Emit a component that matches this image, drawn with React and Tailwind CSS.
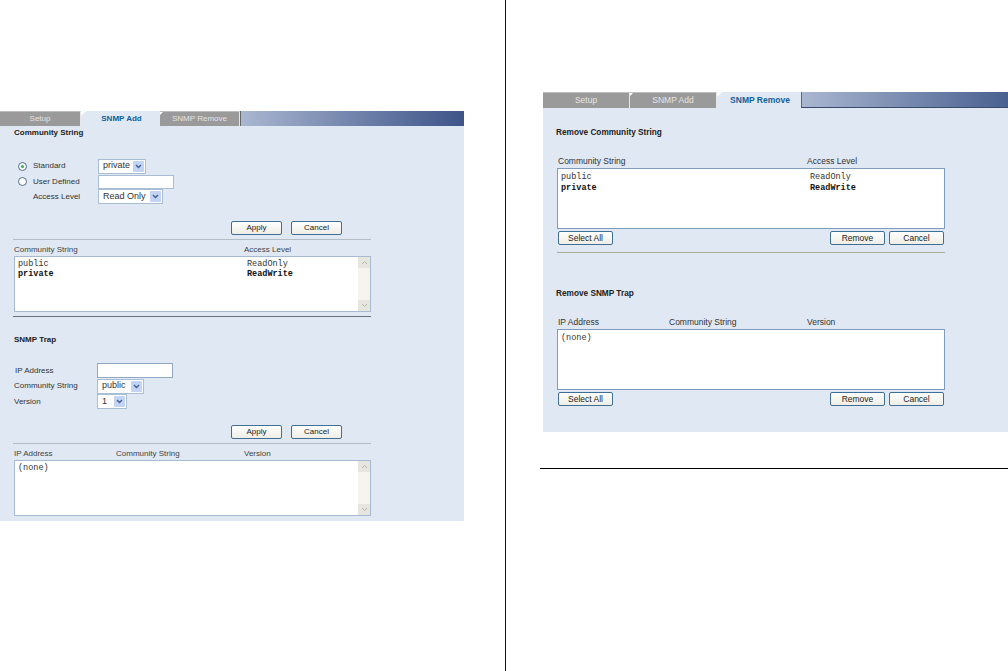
const sans = "font-['Liberation_Sans',Arial,sans-serif]";
const mono = "font-['Liberation_Mono','Courier_New',monospace]";

function Corner({ size = 5 }) {
  return (
    <svg className="absolute left-0 top-0" width={size} height={size} viewBox="0 0 5 5">
      <path d="M0 0H5L0 5Z" fill="#fff" />
    </svg>
  );
}

function Tabs({ items, active, widths, height, end, size, extra }) {
  return (
    <div className={`flex ${height} ${size} ${sans}`}>
      {items.map((t, i) => (
        <div
          key={t}
          style={{ width: widths[i] }}
          className={
            i === active
              ? "relative flex items-center justify-center bg-[#e0e8f3] pl-[2px] font-bold text-[#0f5f9a]"
              : "relative flex items-center justify-center border-r border-[#e6e6e6] bg-[#9a9a9a] border-t border-t-[#bdbdbd] text-[#e4e4e4]"
          }
        >
          {i === active ? <Corner /> : i > 0 && <Corner size={3} />}
          {t}
        </div>
      ))}
      <div className={`flex-1 border-l border-[#666] bg-gradient-to-r from-[#aab7d0] ${end} ${extra}`} />
    </div>
  );
}

function Btn({ children, w = "w-[51px]" }) {
  return (
    <div
      className={`${w} flex h-[14px] items-center justify-center rounded-[2px] border border-[#3f6f95] bg-gradient-to-b from-white to-[#eeeee6] text-[#222] ${sans}`}
    >
      {children}
    </div>
  );
}

function Sel({ children, w, h = "h-[15px]" }) {
  return (
    <div className={`${w} ${h} flex items-center justify-between border border-[#a9bdd4] bg-white pl-[4px] pr-[1px] text-[9px] text-[#333] ${sans}`}>
      <span>{children}</span>
      <span className="flex h-[11px] w-[11px] items-center justify-center rounded-[1px] bg-[#c3d3f3]">
        <svg width="7" height="5" viewBox="0 0 7 5">
          <path d="M1 1L3.5 3.5L6 1" fill="none" stroke="#3f5f9a" strokeWidth="1.4" />
        </svg>
      </span>
    </div>
  );
}

function TextBox({ w, h = "h-[15px]", color = "border-[#a9bdd4]" }) {
  return <div className={`${w} ${h} border ${color} bg-white`} />;
}

function Radio({ on }) {
  return (
    <span className="flex h-[9px] w-[9px] items-center justify-center rounded-full border border-[#4f6f90] bg-white">
      {on && <span className="h-[3px] w-[3px] rounded-full bg-[#2fae4f]" />}
    </span>
  );
}

function ScrollBar() {
  return (
    <div className="flex w-[12px] flex-col justify-between bg-[#f5f5ee]">
      <div className="flex h-[11px] items-center justify-center bg-[#e6e6de]">
        <svg width="7" height="5" viewBox="0 0 7 5"><path d="M1 4L3.5 1.5L6 4" fill="none" stroke="#b5b5ad" /></svg>
      </div>
      <div className="flex h-[11px] items-center justify-center bg-[#e6e6de]">
        <svg width="7" height="5" viewBox="0 0 7 5"><path d="M1 1L3.5 3.5L6 1" fill="none" stroke="#b5b5ad" /></svg>
      </div>
    </div>
  );
}

function ListBox({ rows, col2, h, w, scroll, rowH, top, border }) {
  return (
    <div className={`flex ${h} ${w} border ${border} bg-white text-[8.5px] ${mono}`}>
      <div className={`flex-1 pl-[3px] ${top}`}>
        {rows.map((r, i) => (
          <div key={r[0]} className={`flex ${rowH} items-center ${i === 1 ? "font-bold text-[#111]" : "text-[#333]"}`}>
            <span style={{ width: col2 }}>{r[0]}</span>
            <span>{r[1]}</span>
          </div>
        ))}
      </div>
      {scroll && <ScrollBar />}
    </div>
  );
}

function FormRow({ label, children, labelW, ml, radio, on, h }) {
  return (
    <div className={`flex items-center ${h} ${ml}`}>
      {radio !== undefined && (
        <span className="flex w-[15px] justify-start">{radio && <Radio on={on} />}</span>
      )}
      <span style={{ width: labelW }} className="text-[#333]">{label}</span>
      {children}
    </div>
  );
}

function Heading({ children, cls }) {
  return <div className={`flex items-center font-bold text-[#222] ${cls}`}>{children}</div>;
}

function LeftPanel() {
  return (
    <div className={`w-[464px] text-[8px] ${sans}`}>
      <Tabs items={["Setup", "SNMP Add", "SNMP Remove"]} active={1} widths={[81, 79, 80]} height="h-[15px]" end="to-[#3f5488]" size="text-[8px]" extra="" />
      <div className="flex h-[395px] flex-col bg-[#e0e8f3] pl-[14px]">
        <Heading cls="h-[14px]">Community String</Heading>
        <div className="mt-[18px] flex flex-col">
          <FormRow h="h-[16px]" ml="ml-[4px]" radio on label="Standard" labelW={65}><Sel w="w-[48px]">private</Sel></FormRow>
          <FormRow h="h-[15px]" ml="ml-[4px]" radio label="User Defined" labelW={65}><TextBox w="w-[76px]" h="h-[14px]" /></FormRow>
          <FormRow h="h-[15px]" ml="ml-[4px]" radio={false} label="Access Level" labelW={65}><Sel w="w-[65px]">Read Only</Sel></FormRow>
        </div>
        <div className="ml-[217px] mt-[17px] flex gap-[9px]"><Btn>Apply</Btn><Btn>Cancel</Btn></div>
        <div className="-ml-px mt-[4px] h-px w-[358px] bg-[#b4bcc4]" />
        <div className="flex h-[16px] items-center pt-[4px] text-[#444]"><span className="w-[230px]">Community String</span><span>Access Level</span></div>
        <ListBox border="border-[#a5bbd3]" h="h-[56px]" w="w-[357px]" rowH="h-[10px]" top="pt-[2px]" col2={229} scroll rows={[["public", "ReadOnly"], ["private", "ReadWrite"]]} />
        <div className="-ml-px mt-[4px] h-[1px] w-[358px] bg-[#6a7278]" />
        <Heading cls="mt-[15px] h-[15px]">SNMP Trap</Heading>
        <div className="mt-[16px] flex flex-col">
          <FormRow h="h-[15px]" ml="ml-px" label="IP Address" labelW={82}><TextBox w="w-[76px]" color="border-[#8fa9c4]" /></FormRow>
          <FormRow h="h-[16px]" label="Community String" labelW={83}><Sel w="w-[47px]">public</Sel></FormRow>
          <FormRow h="h-[15px]" label="Version" labelW={83}><Sel w="w-[30px]">1</Sel></FormRow>
        </div>
        <div className="ml-[217px] mt-[16px] flex gap-[9px]"><Btn>Apply</Btn><Btn>Cancel</Btn></div>
        <div className="-ml-px mt-[4px] h-px w-[358px] bg-[#b4bcc4]" />
        <div className="flex h-[16px] items-center pt-[3px] text-[#444]"><span className="w-[102px]">IP Address</span><span className="w-[128px]">Community String</span><span>Version</span></div>
        <ListBox border="border-[#a5bbd3]" h="h-[56px]" w="w-[357px]" rowH="h-[10px]" top="pt-[2px]" col2={229} scroll rows={[["(none)", ""]]} />
      </div>
    </div>
  );
}

function RightPanel() {
  return (
    <div className={`text-[8.5px] ${sans}`}>
      <Tabs items={["Setup", "SNMP Add", "SNMP Remove"]} active={2} widths={[87, 87, 84]} height="h-[16px]" end="to-[#4a6090]" size="text-[8.5px]" extra="border-b border-b-[#3a4a6a]" />
      <div className="flex h-[324px] flex-col bg-[#e0e8f3] pl-[13px]">
        <Heading cls="mt-[18px] h-[14px] text-[8.25px]">Remove Community String</Heading>
        <div className="ml-px mt-[5px] flex h-[23px] items-end pl-px text-[#333]"><span className="w-[249px]">Community String</span><span>Access Level</span></div>
        <div className="ml-px"><ListBox border="border-[#7f9cba]" h="h-[61px]" w="w-[388px]" rowH="h-[11px]" top="pt-[3px]" col2={249} rows={[["public", "ReadOnly"], ["private", "ReadWrite"]]} /></div>
        <div className="ml-px mt-[2px] flex w-[388px] items-center pl-px pr-px">
          <Btn w="w-[55px]">Select All</Btn>
          <div className="ml-auto flex gap-[4px]"><Btn w="w-[55px]">Remove</Btn><Btn w="w-[55px]">Cancel</Btn></div>
        </div>
        <div className="ml-px mt-[7px] h-px w-[388px] bg-[#aaa99a]" />
        <Heading cls="mt-[34px] h-[14px] text-[8.25px]">Remove SNMP Trap</Heading>
        <div className="ml-px mt-[6px] flex h-[22px] items-end pl-px text-[#333]"><span className="w-[111px]">IP Address</span><span className="w-[138px]">Community String</span><span>Version</span></div>
        <div className="ml-px"><ListBox border="border-[#7f9cba]" h="h-[61px]" w="w-[388px]" rowH="h-[11px]" top="pt-[3px]" col2={249} rows={[["(none)", ""]]} /></div>
        <div className="ml-px mt-[2px] flex w-[388px] items-center pl-px pr-px">
          <Btn w="w-[55px]">Select All</Btn>
          <div className="ml-auto flex gap-[4px]"><Btn w="w-[55px]">Remove</Btn><Btn w="w-[55px]">Cancel</Btn></div>
        </div>
      </div>
    </div>
  );
}

export default function App() {
  return (
    <div className="flex h-[671px] w-[1008px] overflow-hidden bg-white">
      <div className="w-[506px] border-r border-[#111] pt-[111px]"><LeftPanel /></div>
      <div className="flex-1 pt-[92px]">
        <div className="ml-[37px]"><RightPanel /></div>
        <div className="ml-[34px] mt-[36px] h-px bg-black" />
      </div>
    </div>
  );
}
